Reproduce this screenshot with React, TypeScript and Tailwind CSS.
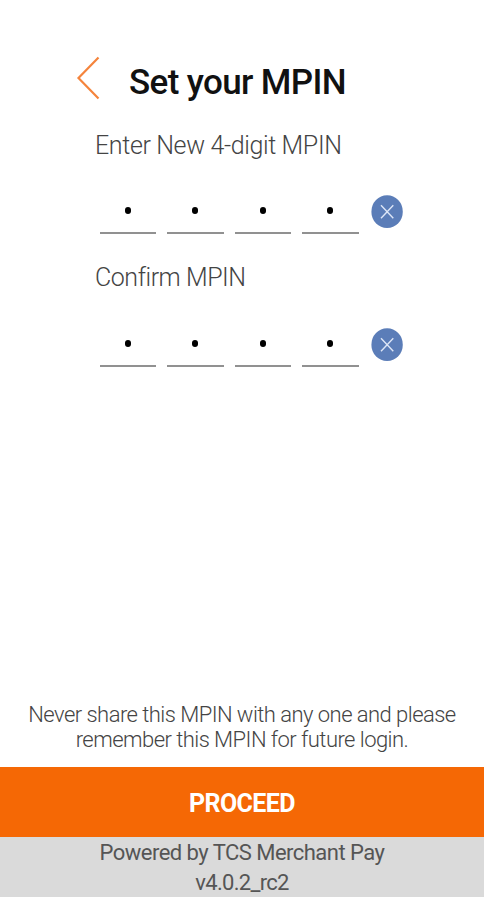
import React from "react";

function ClearIcon() {
  return (
    <svg className="mt-[17px] ml-3 h-[34px] w-8 shrink-0" viewBox="0 0 32 34" fill="none">
      <ellipse cx="16.1" cy="16.7" rx="15.7" ry="16.4" fill="#5b7db8" />
      <path d="M10 10.2 L22.3 23.2 M22.3 10.2 L10 23.2" stroke="#dce5f6" strokeWidth="1.4" />
    </svg>
  );
}

function PinRow() {
  return (
    <div className="ml-[99.5px] flex h-[56px] shrink-0">
      <div className="flex gap-[11px]">
        {[0, 1, 2, 3].map((i) => (
          <div key={i} className="flex h-[56px] w-[56.5px] justify-center border-b-2 border-[#919191]">
            <span className="mt-[29px] h-[7px] w-[6px] rounded-full bg-black" />
          </div>
        ))}
      </div>
      <ClearIcon />
    </div>
  );
}

export default function App() {
  return (
    <main className="flex h-[900px] w-[487px] flex-col bg-white font-['Roboto',sans-serif] text-[#444]">
      <header className="flex h-[126px] shrink-0 items-start">
        <svg className="mt-[56px] ml-[76px] h-11 w-6 shrink-0" viewBox="0 0 24 44" fill="none">
          <path d="M22.5 1.5 L2.5 22 L22.5 42.5" stroke="#f5843c" strokeWidth="2.2" />
        </svg>
        <h1 className="mt-[63px] ml-[29px] text-[35px] leading-10 font-medium tracking-[-0.64px] whitespace-nowrap text-[#111]">Set your MPIN</h1>
      </header>
      <p className="ml-[95px] h-[52px] shrink-0 pt-px text-[25px] leading-[38px] font-light tracking-[-0.37px] whitespace-nowrap">Enter New 4-digit MPIN</p>
      <PinRow />
      <p className="mt-[24px] ml-[95px] h-[53px] shrink-0 pt-px text-[25px] leading-[38px] font-light tracking-[-0.45px] whitespace-nowrap">Confirm MPIN</p>
      <PinRow />
      <p className="mt-auto mb-[15px] w-[484px] text-center text-[22px] leading-[25px] font-light tracking-[-0.54px] whitespace-nowrap">
        Never share this MPIN with any one and please<br />remember this MPIN for future login.
      </p>
      <button className="h-[70px] w-[484px] shrink-0 bg-[#f56805] pt-[3px] text-[25px] font-bold tracking-[-0.6px] text-white">PROCEED</button>
      <footer className="mb-[3px] h-[60px] w-[484px] shrink-0 bg-[#dadada] pt-px text-center text-[22px] leading-[30px] tracking-[-0.53px] text-[#555]">
        <p>Powered by TCS Merchant Pay</p><p className="tracking-[-0.7px]">v4.0.2_rc2</p>
      </footer>
    </main>
  );
}
